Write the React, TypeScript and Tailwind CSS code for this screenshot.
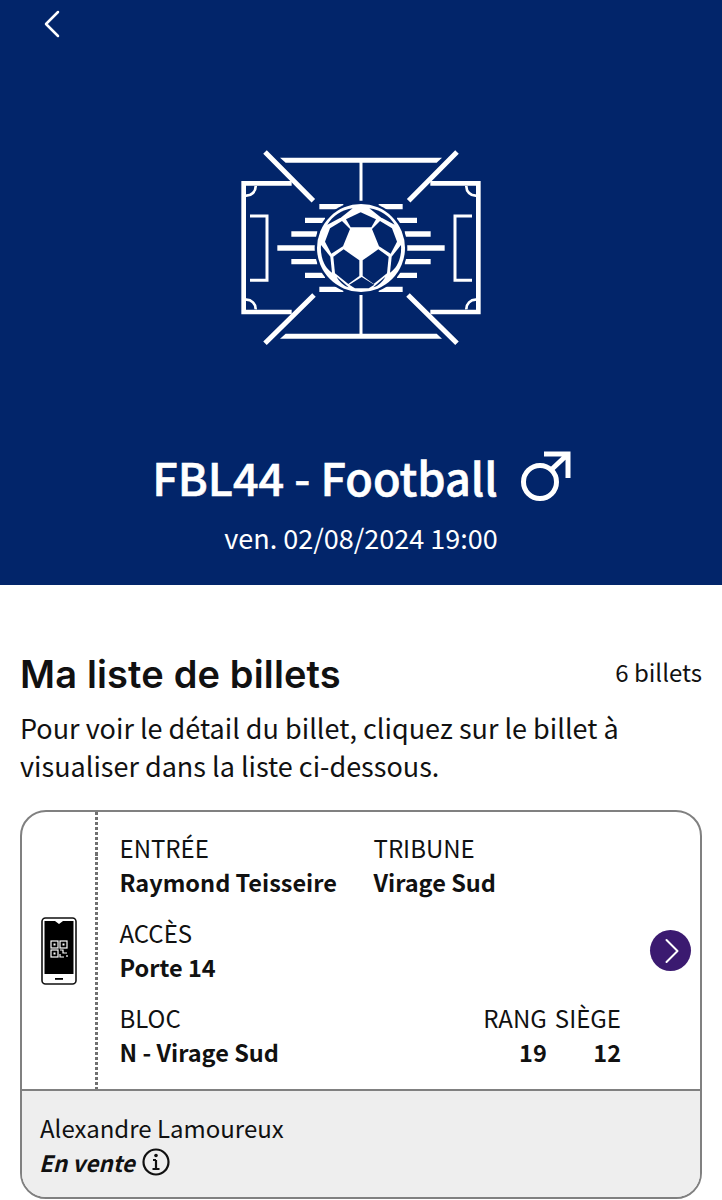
import * as React from "react";
import { ChevronLeft, ChevronRight } from "lucide-react";

const bodyFont = { fontFamily: '"Noto Sans CJK SC", "Noto Sans", sans-serif' };

function PitchHalf() {
  return (
    <g>
      <path d="M215 160H71V546H215" fill="none" stroke="#fff" strokeWidth="14" />
      <path d="M135 66L280 212M135 640L282 495" fill="none" stroke="#fff" strokeWidth="15" />
      <path d="M90 258H141V451H90" fill="none" stroke="#fff" strokeWidth="9" />
      <path d="M107 168A28 28 0 0 1 78 197M107 538A28 28 0 0 0 78 509" fill="none" stroke="#fff" strokeWidth="8" />
      <path d="M298 230H370M255 271H315M214 312H292M172 354H285M214 395H292M255 436H315M298 478H370" fill="none" stroke="#fff" strokeWidth="16" />
    </g>
  );
}

function BallPanels() {
  return (
    <g fill="#02256a">
      <path d="M330 295L366 273L390 297L369 349L334 371L315 335Z" />
      <path d="M340 380L371 358L418 391V438L385 462L345 430Z" />
      <path d="M303 345L331 380L336 428C316 415 300 385 303 345Z" />
      <path d="M322 284C338 258 365 240 398 235L364 262Z" />
      <path d="M350 440L386 472C372 468 358 456 350 440Z" />
    </g>
  );
}

function PitchIcon() {
  return (
    <svg viewBox="0 0 840 690" className="mr-[2px] block h-[230px] w-[280px]">
      <path d="M180 83H666L650 98H197Z" fill="#fff" />
      <path d="M180 626H666L650 611H197Z" fill="#fff" />
      <path d="M423 95V212M423 495V612" stroke="#fff" strokeWidth="9" />
      <PitchHalf />
      <g transform="translate(846 0) scale(-1 1)">
        <PitchHalf />
      </g>
      <circle cx="423" cy="354" r="139" fill="#02256a" />
      <circle cx="423" cy="354" r="132" fill="#fff" />
      <BallPanels />
      <g transform="translate(846 0) scale(-1 1)">
        <BallPanels />
      </g>
      <path d="M378 268L422 247L468 268L454 292H392Z" fill="#02256a" />
      <path d="M388 464L425 441L463 464L446 475H405Z" fill="#02256a" />
    </svg>
  );
}

function MaleIcon() {
  return (
    <svg viewBox="0 0 56 56" className="h-[56px] w-[56px]" fill="none" stroke="#fff" strokeWidth="5">
      <circle cx="21" cy="33" r="16.5" />
      <path d="M32 21L49 5M25 5H49V29" />
    </svg>
  );
}

function PhoneIcon() {
  return (
    <svg viewBox="0 0 36 68" className="h-[68px] w-[36px]">
      <rect x="1" y="1" width="34" height="66" rx="3.5" fill="#fff" stroke="#111" strokeWidth="1.6" />
      <path d="M3.5 4H14L18 7L22 4H32.5V57H3.5Z" fill="#000" />
      <rect x="14" y="61" width="8" height="1.8" fill="#000" />
      <g fill="none" stroke="#fff" strokeWidth="1.2">
        <rect x="10" y="24" width="7" height="7" />
        <rect x="19" y="24" width="7" height="7" />
        <rect x="10" y="33" width="7" height="7" />
        <path d="M19 33H22V36H26M19 37V40H23M26 38V40" />
      </g>
      <g fill="#fff">
        <rect x="12.5" y="26.5" width="2" height="2" />
        <rect x="21.5" y="26.5" width="2" height="2" />
        <rect x="12.5" y="35.5" width="2" height="2" />
      </g>
    </svg>
  );
}

function Field({ label, value, className }: { label: string; value: string; className?: string }) {
  return (
    <div className={className}>
      <div>{label}</div>
      <div className="text-[23.5px] font-bold">{value}</div>
    </div>
  );
}

export default function App() {
  return (
    <div className="h-[1200px] w-[722px] overflow-hidden bg-white text-[#111]" style={bodyFont}>
      <header className="flex h-[585px] flex-col items-center bg-[#02256a] text-white">
        <div className="h-[130px] w-full pl-[28px]">
          <ChevronLeft className="h-[48px] w-[48px]" strokeWidth={1.25} />
        </div>
        <PitchIcon />
        <div className="ml-[5px] mt-[82px] flex h-[70px] items-center gap-[21px]">
          <h1 className="text-[45px] leading-[70px] font-medium [-webkit-text-stroke:0.6px_white]">FBL44 - Football</h1>
          <MaleIcon />
        </div>
        <p className="mt-[6px] text-[27px] leading-[40px]">ven. 02/08/2024 19:00</p>
      </header>

      <section className="px-5 pt-[65px]">
        <div className="flex items-center justify-between">
          <h2
            className="text-[38px] leading-[48px] font-semibold tracking-[0.15px]"
            style={{ fontFamily: '"Inter", sans-serif' }}
          >
            Ma liste de billets
          </h2>
          <span className="mb-1 text-[24px] leading-[34px]">6 billets</span>
        </div>
        <p className="mt-[11px] text-[27px] leading-[38px]">
          Pour voir le détail du billet, cliquez sur le billet à visualiser dans la liste ci-dessous.
        </p>

        <article className="mt-[25px] h-[389px] overflow-hidden rounded-[26px] border-2 border-[#808080] text-[24px] leading-[34px]">
          <div className="flex h-[277px] items-center">
            <div className="flex h-full w-[73px] items-center justify-center">
              <PhoneIcon />
            </div>
            <div className="h-full w-[3px] bg-[repeating-linear-gradient(to_bottom,#707070_0,#707070_3.5px,transparent_3.5px,transparent_5px)]" />
            <div className="flex h-full flex-1 flex-col gap-[17px] pl-[21.5px] pt-[19px]">
              <div className="flex">
                <Field label="ENTRÉE" value="Raymond Teisseire" className="w-[254px]" />
                <Field label="TRIBUNE" value="Virage Sud" />
              </div>
              <Field label="ACCÈS" value="Porte 14" />
              <div className="flex">
                <Field label="BLOC" value="N - Virage Sud" className="flex-1" />
                <Field label="RANG" value="19" className="text-right" />
                <Field label="SIÈGE" value="12" className="ml-2 text-right" />
              </div>
            </div>
            <div className="ml-[29px] mr-[9px] flex h-[41px] w-[41px] items-center justify-center rounded-full bg-[#3b1a70] pl-[2px] text-white">
              <ChevronRight className="h-[44px] w-[44px] shrink-0" strokeWidth={1.1} />
            </div>
          </div>
          <div className="h-[108px] border-t-2 border-[#808080] bg-[#eeeeee] pl-[17px] pt-[20px]">
            <div className="pl-px">Alexandre Lamoureux</div>
            <div className="flex items-center gap-[7px]">
              <span className="text-[22.5px] font-bold italic">En vente</span>
              <svg viewBox="0 0 28 28" className="h-[28px] w-[28px]" fill="none" stroke="#111" strokeWidth="2.2">
                <circle cx="14" cy="14" r="12.5" />
                <path d="M14 12V21M10.5 21H17.5M11 12H14" />
                <circle cx="14" cy="7.5" r="1.8" fill="#111" stroke="none" />
              </svg>
            </div>
          </div>
        </article>
      </section>
    </div>
  );
}
